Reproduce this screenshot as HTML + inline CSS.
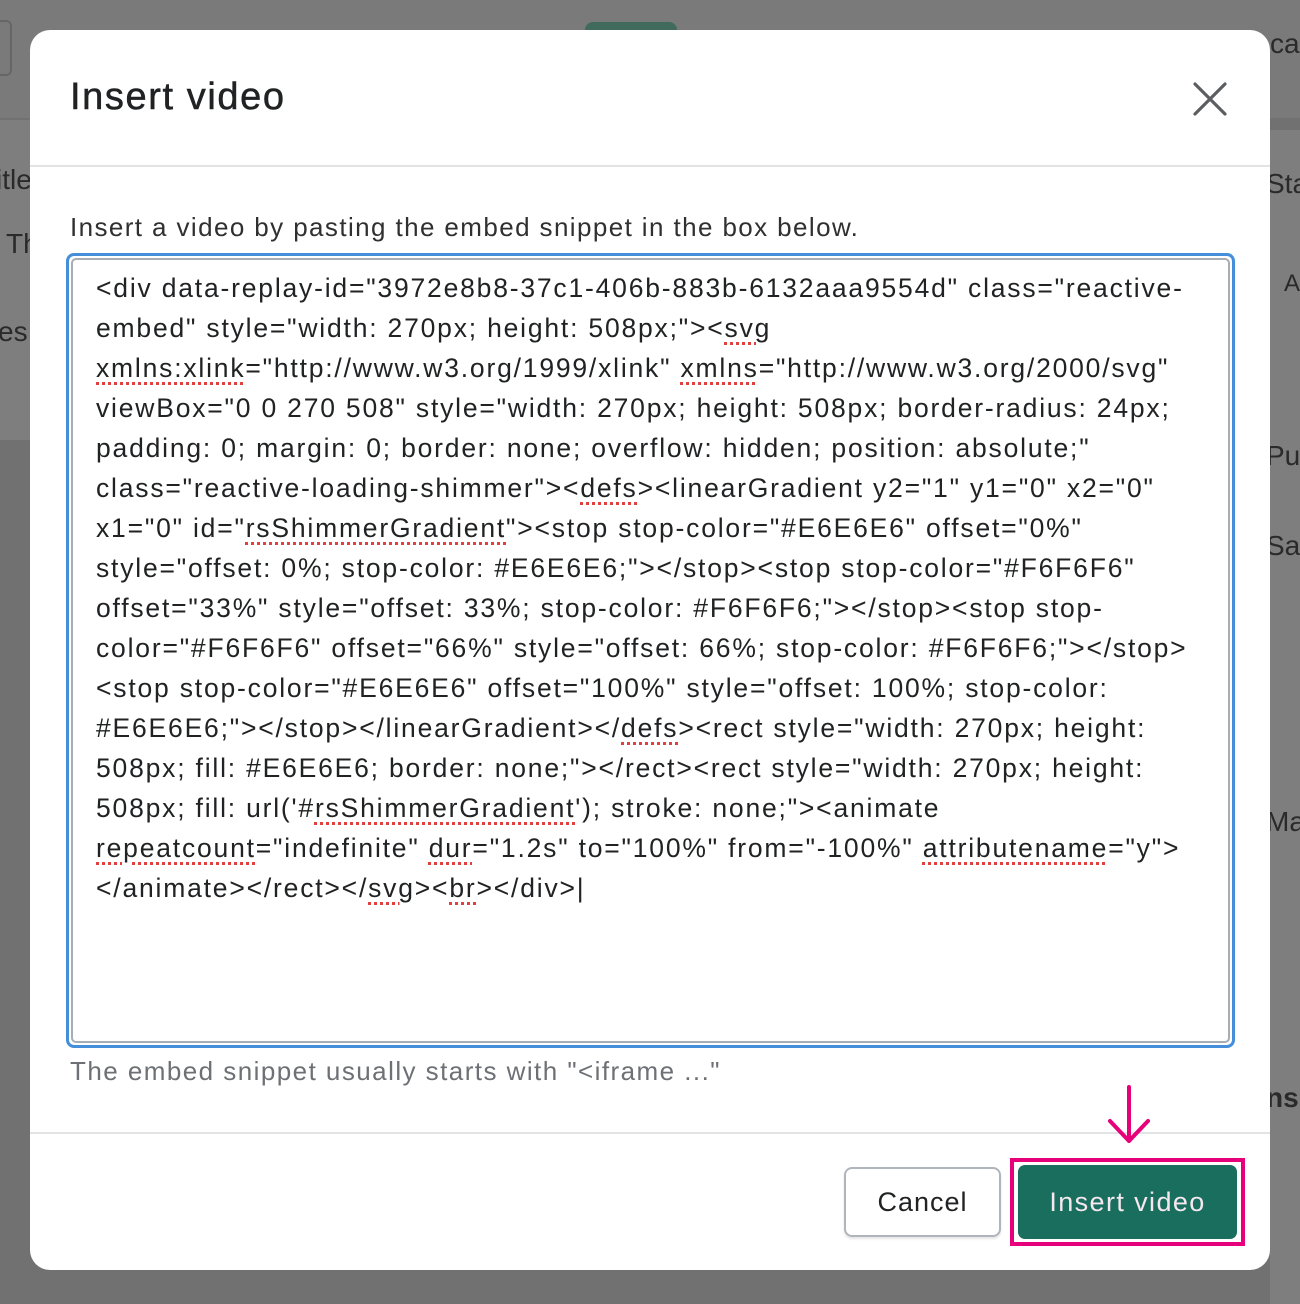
<!DOCTYPE html>
<html><head><meta charset="utf-8"><style>
*{margin:0;padding:0;box-sizing:border-box}
body{width:1300px;height:1304px;background:#717172;font-family:"Liberation Sans",sans-serif;position:relative;overflow:hidden}
.bg{position:absolute;background:#7d7d7e}
.bt{position:absolute;color:#2a2a2a;font-size:28px}
.modal{position:absolute;left:30px;top:30px;width:1240px;height:1240px;background:#fff;border-radius:20px;overflow:hidden}
.title{position:absolute;left:40px;top:46px;font-size:38px;color:#202223;letter-spacing:1.6px;-webkit-text-stroke:0.5px #202223}
.close{position:absolute;left:1162px;top:51px}
.hr{position:absolute;left:0;width:1240px;height:2px;background:#e1e3e5}
.desc{position:absolute;left:40px;top:182px;font-size:26px;color:#303030;letter-spacing:1.4px}
.ta{position:absolute;left:36px;top:223px;width:1169px;height:795px;border:3px solid #458fda;border-radius:8px}
.tai{position:absolute;left:2px;top:2px;right:2px;bottom:2px;border:2px solid #a8adb4;border-radius:5px}
.txt{position:absolute;left:66px;top:238px;font-size:26.5px;line-height:40px;color:#202223;white-space:pre;letter-spacing:1.8px}
.u{text-decoration:underline dotted #e0413f;text-underline-offset:5px;text-decoration-thickness:3px}
.hint{position:absolute;left:40px;top:1026px;font-size:26px;color:#6d7175;letter-spacing:1.45px}
.cancel{position:absolute;left:814px;top:1137px;width:157px;height:70px;border:2px solid #b0b5bc;border-radius:8px;font-size:27px;color:#202223;text-align:center;line-height:66px;box-shadow:0 2px 2px rgba(0,0,0,.1);letter-spacing:1px}
.pink{position:absolute;left:980px;top:1128px;width:235px;height:88px;border:4px solid #e6007a}
.ins{position:absolute;left:4px;top:3px;width:219px;height:74px;background:#1a6e5e;border-radius:7px;color:#f5e8ef;font-size:27px;text-align:center;line-height:74px;letter-spacing:1.4px}
</style></head><body>
<div class="bg" style="left:0;top:0;width:1300px;height:118px;background:#7a7a7b"></div>
<div class="bg" style="left:-10px;top:20px;width:22px;height:56px;border:2px solid #666;border-radius:6px;background:transparent"></div>
<div class="bg" style="left:585px;top:22px;width:92px;height:10px;background:#3f6a5c;border-radius:8px 8px 0 0"></div>
<div class="bg" style="left:0;top:120px;width:30px;height:320px;background:#7e7e7f"></div>
<div class="bt" style="left:-4px;top:164px">itle</div>
<div class="bt" style="left:6px;top:228px">Th</div>
<div class="bt" style="left:-2px;top:316px">es</div>
<div class="bg" style="left:1270px;top:130px;width:30px;height:1174px;background:#7e7e7f"></div>
<div class="bt" style="left:1270px;top:28px">ca</div>
<div class="bt" style="left:1266px;top:168px">Sta</div>
<div class="bt" style="left:1284px;top:270px;font-size:24px">A</div>
<div class="bt" style="left:1266px;top:440px">Pu</div>
<div class="bt" style="left:1266px;top:530px">Sal</div>
<div class="bt" style="left:1266px;top:806px">Ma</div>
<div class="bt" style="left:1266px;top:1082px;font-weight:bold">ns</div>
<div class="modal">
<div class="title">Insert video</div>
<svg class="close" width="36" height="36" viewBox="0 0 36 36"><path d="M3 3L33 33M33 3L3 33" stroke="#5c5f62" stroke-width="3.2" stroke-linecap="round"/></svg>
<div class="hr" style="top:135px"></div>
<div class="desc">Insert a video by pasting the embed snippet in the box below.</div>
<div class="ta"><div class="tai"></div></div>
<div class="txt">&lt;div data-replay-id="3972e8b8-37c1-406b-883b-6132aaa9554d" class="reactive-
embed" style="width: 270px; height: 508px;"&gt;&lt;<span class="u">svg</span>
<span class="u">xmlns:xlink</span>="http://www.w3.org/1999/xlink" <span class="u">xmlns</span>="http://www.w3.org/2000/svg"
viewBox="0 0 270 508" style="width: 270px; height: 508px; border-radius: 24px;
padding: 0; margin: 0; border: none; overflow: hidden; position: absolute;"
class="reactive-loading-shimmer"&gt;&lt;<span class="u">defs</span>&gt;&lt;linearGradient y2="1" y1="0" x2="0"
x1="0" id="<span class="u">rsShimmerGradient</span>"&gt;&lt;stop stop-color="#E6E6E6" offset="0%"
style="offset: 0%; stop-color: #E6E6E6;"&gt;&lt;/stop&gt;&lt;stop stop-color="#F6F6F6"
offset="33%" style="offset: 33%; stop-color: #F6F6F6;"&gt;&lt;/stop&gt;&lt;stop stop-
color="#F6F6F6" offset="66%" style="offset: 66%; stop-color: #F6F6F6;"&gt;&lt;/stop&gt;
&lt;stop stop-color="#E6E6E6" offset="100%" style="offset: 100%; stop-color:
#E6E6E6;"&gt;&lt;/stop&gt;&lt;/linearGradient&gt;&lt;/<span class="u">defs</span>&gt;&lt;rect style="width: 270px; height:
508px; fill: #E6E6E6; border: none;"&gt;&lt;/rect&gt;&lt;rect style="width: 270px; height:
508px; fill: url('#<span class="u">rsShimmerGradient</span>'); stroke: none;"&gt;&lt;animate
<span class="u">repeatcount</span>="indefinite" <span class="u">dur</span>="1.2s" to="100%" from="-100%" <span class="u">attributename</span>="y"&gt;
&lt;/animate&gt;&lt;/rect&gt;&lt;/<span class="u">svg</span>&gt;&lt;<span class="u">br</span>&gt;&lt;/div&gt;|</div>
<div class="hint">The embed snippet usually starts with "&lt;iframe ..."</div>
<div class="hr" style="top:1102px"></div>
<svg style="position:absolute;left:1076px;top:1055px" width="46" height="60" viewBox="0 0 46 60"><path d="M23 2V56M4 36L23 56L42 36" fill="none" stroke="#e6007a" stroke-width="4" stroke-linecap="round" stroke-linejoin="round"/></svg>
<div class="cancel">Cancel</div>
<div class="pink"><div class="ins">Insert video</div></div>
</div>
</body></html>
